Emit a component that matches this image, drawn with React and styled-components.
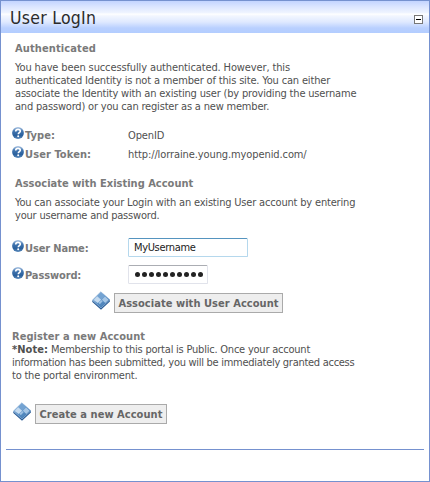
import React from "react";
import styled, { createGlobalStyle } from "styled-components";

const GlobalStyle = createGlobalStyle`
  * { box-sizing: border-box; }
  body {
    margin: 0;
    background: #fff;
    color: #505050;
    font: 11px/13px "DejaVu Sans Condensed", Tahoma, "DejaVu Sans", sans-serif;
  }
`;

const Panel = styled.section`
  display: flex;
  flex-direction: column;
  width: 430px;
  height: 482px;
  border: 1px solid #7591cf;
  background: #fff;
`;

const Header = styled.header`
  display: flex;
  align-items: center;
  justify-content: space-between;
  height: 32px;
  padding: 0 6px 0 9px;
  background: linear-gradient(#c3d4ff 0, #dce6ff 6px, #f0f5ff 12px, #fff 13px, #f2f6ff 15px, #dfe9ff 21px, #b9d0ff 27px, #b3cdff 32px);
`;

const Title = styled.h1`
  margin: 2px 0 0;
  font-size: 17.5px;
  line-height: 22px;
  font-weight: 400;
  letter-spacing: 0.26px;
  color: #2b2b2b;
`;

const CollapseButton = styled.button`
  display: flex;
  align-items: center;
  justify-content: center;
  width: 9px;
  height: 9px;
  margin-top: 5px;
  padding: 0;
  border: 1px solid #777;
  background: #fff;

  &::before {
    content: "";
    width: 5px;
    height: 1px;
    background: #000;
  }
`;

const Content = styled.div`
  display: flex;
  flex-direction: column;
  padding: 9px 10px 0 11px;
`;

const Heading = styled.h2`
  margin: ${(p) => p.$top || 0}px 0 ${(p) => p.$gap || 0}px ${(p) => p.$indent || 0}px;
  font-size: 11px;
  line-height: 13px;
  font-weight: 700;
  letter-spacing: ${(p) => p.$track || 0}px;
  color: #7a7a7a;
`;

const Paragraph = styled.p`
  margin: 0 0 ${(p) => p.$gap || 0}px ${(p) => p.$indent || 0}px;
`;

const Line = styled.span`
  display: block;
  white-space: nowrap;
  letter-spacing: ${(p) => p.$track || 0}px;
`;

const Note = styled.strong`
  margin-right: 3px;
  letter-spacing: 0.05px;
`;

const Field = styled.div`
  display: flex;
  align-items: flex-start;
  height: ${(p) => p.$height}px;
`;

const LabelCell = styled.div`
  display: flex;
  width: 116px;
  padding-top: ${(p) => p.$top || 0}px;
`;

const Label = styled.label`
  margin: 2px 0 0 1px;
  font-weight: 700;
  white-space: nowrap;
  letter-spacing: ${(p) => p.$track || 0}px;
  color: #7a7a7a;
`;

const Value = styled.span`
  margin-top: 2px;
  letter-spacing: ${(p) => p.$track}px;
`;

const InputBox = styled.div`
  display: flex;
  align-items: center;
  width: ${(p) => p.$width}px;
  height: 19px;
  padding: 0 5px 1px;
  border: 1px solid ${(p) => (p.$focused ? "#b5d8ed" : "#e1e3eb")};
  border-top-color: ${(p) => (p.$focused ? "#5594bf" : "#abadb3")};
  border-radius: 1.5px;
  color: #222;
  letter-spacing: -0.34px;
`;

const Dots = styled.div`
  display: flex;
  gap: 2px;
  padding: 1px 0 0 1px;
`;

const Dot = styled.i`
  width: 5px;
  height: 5px;
  border-radius: 50%;
  background: #222;
`;

const Action = styled.div`
  display: flex;
  gap: 3px;
  margin-left: ${(p) => p.$indent}px;
`;

const ActionButton = styled.button`
  width: ${(p) => p.$width}px;
  height: 20px;
  margin-top: 2px;
  padding: 0;
  border: 1px solid #aaa;
  background: #eee;
  color: #666;
  font: inherit;
  font-weight: 700;
  letter-spacing: 0.05px;
  white-space: nowrap;
`;

const Icon = styled.svg`
  display: block;
  flex: none;
`;

const Divider = styled.hr`
  width: 418px;
  height: 1px;
  margin: 25px 0 0 5px;
  border: 0;
  background: #7591cf;
`;

function HelpIcon() {
  return (
    <Icon width="12" height="12" viewBox="0 0 12 12">
      <defs>
        <linearGradient id="helpFill" x2="0" y2="1">
          <stop offset="0" stopColor="#a9c3e2" />
          <stop offset=".35" stopColor="#4276b0" />
          <stop offset=".7" stopColor="#2a609c" />
          <stop offset="1" stopColor="#5888ba" />
        </linearGradient>
      </defs>
      <circle cx="6" cy="6" r="5.9" fill="url(#helpFill)" />
      <path d="M3.7 4.5C3.8 3 4.8 2.4 6 2.4c1.4 0 2.3.7 2.3 1.8 0 1.4-2 1.5-2 3" fill="none" stroke="#fff" strokeWidth="1.6" />
      <circle cx="6.2" cy="9.2" r="1" fill="#fff" />
    </Icon>
  );
}

function DiamondIcon() {
  return (
    <Icon width="19" height="19" viewBox="0 0 19 19">
      <defs>
        <linearGradient id="diamondFill" x1="0" y1="0" x2="1" y2="1">
          <stop offset="0" stopColor="#a9c9e8" />
          <stop offset=".5" stopColor="#5f94c9" />
          <stop offset="1" stopColor="#2c649f" />
        </linearGradient>
      </defs>
      <path d="M.3 9.2 9 17 17.9 8.7v1.8L9 18.8.3 10.9Z" fill="#2a5c95" />
      <path d="M8.8.8 17.9 8.7 9 17 .3 9.2Z" fill="url(#diamondFill)" stroke="#7fa7d0" strokeWidth=".5" />
      <path d="M8.8 1.8 12.7 5.3 9.4 8.5 5.2 5Z" fill="#74a3d2" />
      <path d="M5.1 5.2 9.2 8.7 5.9 12 1.7 9.1Z" fill="#c4daef" />
      <path d="M13 5.6 16.6 8.7 13.2 11.9 9.8 8.7Z" fill="#a6c6e5" />
      <path d="M9.5 9 12.8 12.2 9 15.8 6.2 12.2Z" fill="#5288be" />
      <path d="M6.4 11.7 9.3 9l1.4 1.3-2.9 3Z" fill="#9dc1e3" />
    </Icon>
  );
}

function FieldRow({ label, track, height, top, children }) {
  return (
    <Field $height={height}>
      <LabelCell $top={top}>
        <HelpIcon />
        <Label $track={track}>{label}</Label>
      </LabelCell>
      {children}
    </Field>
  );
}

export default function App() {
  return (
    <>
      <GlobalStyle />
      <Panel>
        <Header>
          <Title>User LogIn</Title>
          <CollapseButton aria-label="Collapse" />
        </Header>
        <Content>
          <Heading $indent={3} $gap={6} $track={0.12}>Authenticated</Heading>
          <Paragraph $indent={3} $gap={14}>
            <Line $track={-0.125}>You have been successfully authenticated. However, this</Line>
            <Line $track={-0.165}>authenticated Identity is not a member of this site. You can either</Line>
            <Line $track={-0.18}>associate the Identity with an existing user (by providing the username</Line>
            <Line $track={-0.19}>and password) or you can register as a new member.</Line>
          </Paragraph>
          <FieldRow label="Type:" track={0.1} height={19}>
            <Value $track={-0.12}>OpenID</Value>
          </FieldRow>
          <FieldRow label="User Token:" track={0.1} height={31}>
            <Value $track={-0.1}>http://lorraine.young.myopenid.com/</Value>
          </FieldRow>
          <Heading $indent={3} $gap={6} $track={0.01}>Associate with Existing Account</Heading>
          <Paragraph $indent={3} $gap={16}>
            <Line $track={-0.18}>You can associate your Login with an existing User account by entering</Line>
            <Line $track={-0.2}>your username and password.</Line>
          </Paragraph>
          <FieldRow label="User Name:" track={-0.14} height={27} top={2}>
            <InputBox $width={120} $focused>MyUsername</InputBox>
          </FieldRow>
          <FieldRow label="Password:" track={-0.12} height={26} top={2}>
            <InputBox $width={80}>
              <Dots>
                {Array.from({ length: 10 }, (_, i) => <Dot key={i} />)}
              </Dots>
            </InputBox>
          </FieldRow>
          <Action $indent={80}>
            <DiamondIcon />
            <ActionButton $width={169}>Associate with User Account</ActionButton>
          </Action>
          <Heading $top={17} $track={0.05}>Register a new Account</Heading>
          <Paragraph $gap={20}>
            <Line $track={-0.22}>
              <Note>*Note:</Note>Membership to this portal is Public. Once your account
            </Line>
            <Line $track={-0.28}>information has been submitted, you will be immediately granted access</Line>
            <Line $track={-0.21}>to the portal environment.</Line>
          </Paragraph>
          <Action $indent={1}>
            <DiamondIcon />
            <ActionButton $width={132}>Create a new Account</ActionButton>
          </Action>
        </Content>
        <Divider />
      </Panel>
    </>
  );
}
